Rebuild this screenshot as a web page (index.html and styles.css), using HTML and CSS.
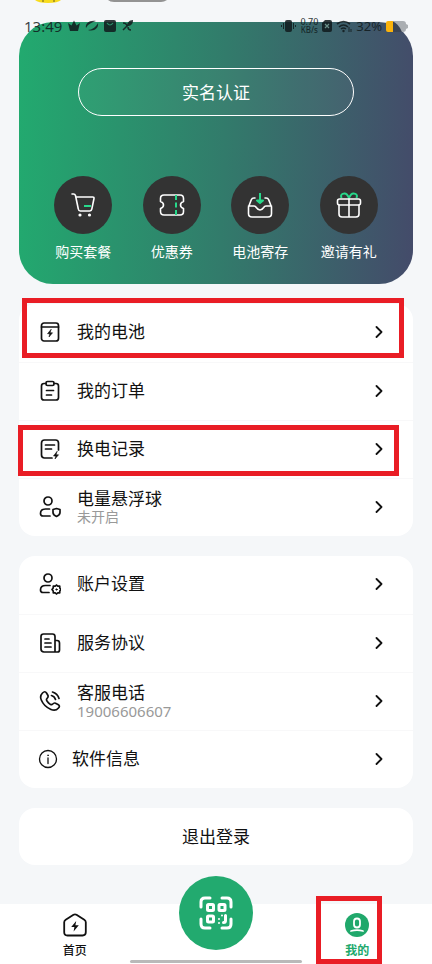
FILE: index.html
```html
<!DOCTYPE html>
<html lang="zh-CN">
<head>
<meta charset="utf-8">
<meta name="viewport" content="width=device-width, initial-scale=1">
<title>我的</title>
<link rel="stylesheet" href="styles.css">
</head>
<body>
<header class="status">
  <svg class="peek" width="140" height="4" viewBox="0 0 140 4" aria-hidden="true">
    <path d="M8 0h26q-3 3-13 3T8 0z" fill="#f8dc1c"/><path d="M16 0v2M27 0v2" stroke="#6b5c20"/>
    <path d="M81 0h59q-3 2-6 2H87q-4 0-6-2z" fill="#939393"/>
  </svg>
  <div class="status-side">
    <span class="clock">13:49</span>
    <svg width="67" height="14" viewBox="0 0 67 14" aria-hidden="true">
      <g fill="currentColor">
        <path d="M0 4l3.500 2.500L6 1.500l2.500 5L12 4l-2 8H2z"/>
        <path d="M18 9c-1-4 3-8 10-7-4 1-8 3-10 7zM30 4c1 5-4 9-10 7 4 0 8-3 10-7z"/>
        <rect x="36" y="1" width="12" height="12" rx="2"/>
        <path d="M65 1c-4 0-6 3-6 6 4 0 6-2 6-6z"/>
      </g>
      <path d="M39 4q3 4 6 0" fill="none" stroke="#2c8d69" stroke-width="1.200"/>
      <path d="M55 4q4 0 4 4M59 7l-4 4M60 8q0 3 3 3" fill="none" stroke="currentColor" stroke-width="1.500"/>
    </svg>
  </div>
  <div class="status-side">
    <svg width="15" height="14" viewBox="0 0 15 14" aria-hidden="true"><rect x="4" y="1" width="7" height="12" rx="2" fill="currentColor"/><path d="M2.500 4v6M.5 6v2M12.500 4v6M14.500 6v2" stroke="currentColor"/></svg>
    <span class="speed"><b>0.70</b><i>KB/s</i></span>
    <svg width="10" height="12" viewBox="0 0 10 12" aria-hidden="true"><path d="M3 0h5q2 0 2 2v8q0 2-2 2H2q-2 0-2-2V3z" fill="currentColor"/><path d="M3 4l4 4M7 4L3 8" stroke="#6b9089" stroke-width="1.200"/></svg>
    <svg width="16" height="12" viewBox="0 0 16 12" aria-hidden="true"><g fill="none" stroke="currentColor" stroke-width="1.600"><path d="M1 4q6.500-5 13 0M3 7q4.500-4 9 0M5 9q2.500-2 5 0"/><path d="M13 7v5M15 9v3" stroke-width="1"/></g><circle cx="7.500" cy="11" r="1.200" fill="currentColor"/></svg>
    <span class="percent">32%</span>
    <svg width="22" height="12" viewBox="0 0 22 12" aria-hidden="true"><path d="M6 1h11q3 0 3 3l2 1v3l-2 1q0 3-3 3H6z" fill="#aaaeb2"/><path d="M6 1q7 3 10 11H6z" fill="#3c4554"/><path d="M2 1h5v11H2q-2 0-2-2V3q0-2 2-2z" fill="#fbb30b"/></svg>
  </div>
</header>

<main class="page">
  <section class="hero">
    <button class="verify" type="button">实名认证</button>
    <nav class="shortcuts" aria-label="快捷服务">
      <a href="#package"><span class="disc"><svg viewBox="0 0 26 26"><path d="M2 2h1.500q1.500 0 2 1.500L8.300 17q.3 2 2 2h9.500q1.700 0 2-1.800L24 6.500q.2-1.500-1.300-1.500H6"/><path class="mint" d="M14 14h7"/><circle class="dot" cx="10" cy="23" r="1.600"/><circle class="dot" cx="19.500" cy="23" r="1.600"/></svg></span>购买套餐</a>
      <a href="#coupon"><span class="disc"><svg viewBox="0 0 26 26"><path d="M5 3h16q3.500 0 3.500 3.500v3q-3 1-3 3.500t3 3.500v3q0 3.500-3.500 3.500H5q-3.500 0-3.500-3.500v-3q3-1 3-3.500t-3-3.500v-3Q1.500 3 5 3z"/><path class="mint" d="M17 3v5M17 10.500v5M17 18v5"/></svg></span>优惠券</a>
      <a href="#deposit"><span class="disc"><svg viewBox="0 0 26 26"><path d="M8 6H7Q5 6 4.300 7.800L1.500 15v6.500Q1.500 25 5 25h16q3.500 0 3.500-3.500V15l-2.800-7.200Q21 6 19 6h-1M1.500 14H7q1.500 0 2.300 1.500Q11 18 13 18t3.700-2.500Q17.500 14 19 14h5.500"/><path class="mint" d="M13 1v9"/><path class="mint fill" d="M10 8.500h6L13 11z"/></svg></span>电池寄存</a>
      <a href="#invite"><span class="disc"><svg viewBox="0 0 26 26"><path class="mint" d="M13 6Q11 1 8 1.500 4 2 5.500 6M13 6q2-5 5-4.500 4 .5 2.500 4.500"/><rect x="1.500" y="7" width="23" height="6" rx="2"/><path d="M3 13v9q0 3 3 3h14q3 0 3-3v-9M13 7v18"/></svg></span>邀请有礼</a>
    </nav>
  </section>

  <section class="card">
    <a class="row" href="#battery">
      <svg class="icon" viewBox="0 0 22 22"><rect x="2.500" y="2" width="17" height="18" rx="2.500"/><path d="M2.500 6h17"/><path class="solid" d="M12 8.500l-3.500 4.200h2.300L10 16l3.500-4.200h-2.300z"/></svg>
      <span class="label">我的电池</span>
      <svg class="chevron" viewBox="0 0 8 12"><path d="M1.500 1l5 5-5 5"/></svg>
      <span class="mark mark-battery"></span>
    </a>
    <a class="row" href="#orders">
      <svg class="icon" viewBox="0 0 22 22"><path d="M7 3.500H5Q2.500 3.500 2.500 6v11.500Q2.500 20 5 20h12q2.500 0 2.500-2.500V6q0-2.500-2.500-2.500h-2"/><rect x="7" y="1.500" width="8" height="4" rx="1.500"/><path d="M7.500 10.500h7M7.500 15h5"/></svg>
      <span class="label">我的订单</span>
      <svg class="chevron" viewBox="0 0 8 12"><path d="M1.500 1l5 5-5 5"/></svg>
    </a>
    <a class="row" href="#swaps">
      <svg class="icon" viewBox="0 0 22 22"><path d="M13 20H5.500q-3 0-3-3V5q0-3 3-3h11q3 0 3 3v7M6.500 7h9M6.500 11h6"/><path class="solid" d="M18 13.500L14.500 18h2.300L16 21l3.500-4.200h-2.300z"/></svg>
      <span class="label">换电记录</span>
      <svg class="chevron" viewBox="0 0 8 12"><path d="M1.500 1l5 5-5 5"/></svg>
      <span class="mark mark-swaps"></span>
    </a>
    <a class="row" href="#float">
      <svg class="icon" viewBox="0 0 22 22"><circle cx="9" cy="5" r="4"/><path d="M11 20H4q-2.500 0-2.500-2.500 0-4.500 5-4.500h4"/><path d="M17.500 12.500l3.500 1v3q0 2.500-3.500 4-3.500-1.500-3.500-4v-3z"/></svg>
      <span class="label">电量悬浮球<small>未开启</small></span>
      <svg class="chevron" viewBox="0 0 8 12"><path d="M1.500 1l5 5-5 5"/></svg>
    </a>
  </section>

  <section class="card">
    <a class="row" href="#account">
      <svg class="icon" viewBox="0 0 22 22"><circle cx="9" cy="5" r="4"/><path d="M10 19.500H4q-2.500 0-2.500-2.500 0-4.500 5-4.500H11"/><path d="M17.500 12l1.300 1.200 1.900-.1.100 1.900 1.200 1.500-1.200 1.500-.1 1.900-1.900-.1-1.300 1.200-1.300-1.200-1.900.1-.1-1.900L13 16.500l1.200-1.500.1-1.900 1.900.1z"/><circle class="solid" cx="17.500" cy="16.500" r=".8"/></svg>
      <span class="label">账户设置</span>
      <svg class="chevron" viewBox="0 0 8 12"><path d="M1.500 1l5 5-5 5"/></svg>
    </a>
    <a class="row" href="#terms">
      <svg class="icon" viewBox="0 0 22 22"><path d="M16 20H5q-3 0-3-3V4.500Q2 2 4.500 2h9Q16 2 16 4.500zM16 8.500h2q2.500 0 2.500 2.500v7q0 2-2 2H16M6 7h4M6 11h6M6 15h6"/></svg>
      <span class="label">服务协议</span>
      <svg class="chevron" viewBox="0 0 8 12"><path d="M1.500 1l5 5-5 5"/></svg>
    </a>
    <a class="row" href="tel:19006606607">
      <svg class="icon" viewBox="0 0 22 22"><path d="M3.500 3Q6 .5 7.500 3L9 5.500Q9.500 7 8 8.500q-1 1 0 2.500 1.300 2 3.200 3.200 1.500.8 2.300 0 1.500-1.700 3-1L19 14.500q2.500 1.500.5 3.500-3 3.500-7.500 1.500Q5 16.500 2.300 10 .5 6 3.500 3zM12.500 5.500q3 .8 4 4M13.500 2q5 1.500 6.500 6.500"/></svg>
      <span class="label">客服电话<small class="phone">19006606607</small></span>
      <svg class="chevron" viewBox="0 0 8 12"><path d="M1.500 1l5 5-5 5"/></svg>
    </a>
    <a class="row row-compact" href="#about">
      <svg class="icon" viewBox="0 0 20 20"><circle cx="10" cy="10" r="8.500"/><path d="M10 9v5.500"/><circle class="solid" cx="10" cy="6.300" r=".5"/></svg>
      <span class="label">软件信息</span>
      <svg class="chevron" viewBox="0 0 8 12"><path d="M1.500 1l5 5-5 5"/></svg>
    </a>
  </section>

  <button class="logout" type="button">退出登录</button>
</main>

<nav class="tabs" aria-label="主导航">
  <a class="tab" href="#home">
    <svg viewBox="0 0 24 24"><path class="house" d="M10.500 1.800q1.500-1 3 0l7.800 5q1.500 1 1.500 2.500v10q0 3.200-3.200 3.200H4.400q-3.200 0-3.200-3.200v-10q0-1.500 1.500-2.500z"/><path d="M13.200 8l-5 6h3.200l-.8 4.500 5.200-6.200h-3.400z" fill="currentColor"/></svg>
    首页
  </a>
  <button class="scan" type="button" aria-label="扫码">
    <svg viewBox="0 0 34 34"><path d="M2 11V6q0-4 4-4h5M23 2h5q4 0 4 4v5M32 23v5q0 4-4 4h-5M11 32H6q-4 0-4-4v-5"/><rect x="8.500" y="8.500" width="6" height="6" rx="1"/><rect x="20" y="8.500" width="6" height="6" rx="1"/><rect x="8.500" y="20" width="6" height="6" rx="1"/><path d="M26.500 19.500v5q0 2-2 2"/><path class="pixels" d="M20 23v0M23 19.500v0M20 27v0"/></svg>
  </button>
  <a class="tab tab-active" href="#mine" aria-current="page">
    <svg viewBox="0 0 24 24"><circle cx="12" cy="12" r="12" fill="currentColor"/><rect x="9" y="5.500" width="6" height="9" rx="3" fill="none" stroke="#fff" stroke-width="1.800"/><path d="M6 18q6-1.600 12 0" fill="none" stroke="#fff" stroke-width="1.800" stroke-linecap="round"/></svg>
    我的
    <span class="mark mark-tab"></span>
  </a>
  <span class="home-bar"></span>
</nav>
</body>
</html>
```
FILE: styles.css
```css
* {
  box-sizing: border-box;
}

body {
  margin: 0;
  position: relative;
  background: #f5f7f9;
  color: #111;
  font-family: "Noto Sans", "Noto Sans CJK SC", sans-serif;
}

a {
  color: inherit;
  text-decoration: none;
}

button {
  font: inherit;
  border: 0;
  padding: 0;
}

svg {
  display: block;
  flex: none;
}

/* Status bar, drawn over the top of the hero card */
.status {
  position: absolute;
  z-index: 2;
  top: 0;
  left: 0;
  right: 0;
  display: flex;
  justify-content: space-between;
  padding: 16px 24px 0;
  color: rgba(16, 26, 28, .85);
}

.peek {
  position: absolute;
  top: 0;
  left: 27px;
}

.status-side {
  display: flex;
  align-items: center;
  gap: 4px;
  height: 20px;
}

.status-side svg {
  overflow: visible;
}

.clock {
  font-size: 15px;
  line-height: 20px;
  margin-right: 2px;
}

.speed {
  display: flex;
  flex-direction: column;
  align-items: center;
  line-height: 8px;
}

.speed b {
  font-size: 9px;
  font-weight: 500;
}

.speed i {
  font-size: 8px;
  font-style: normal;
  font-weight: 500;
}

.percent {
  font-size: 13px;
}

.page {
  display: flex;
  flex-direction: column;
  gap: 20px;
  padding: 22px 19px 0;
}

.hero {
  padding: 46px 20px 22px;
  border-radius: 34px;
  background: linear-gradient(92deg, #22aa6f, #327b6b 52%, #444b6a);
  color: #fff;
}

.verify {
  display: block;
  width: 78%;
  height: 48px;
  margin: 0 auto 60px;
  padding-bottom: 2px;
  border: 1px solid #fff;
  border-radius: 24px;
  background: rgba(255, 255, 255, .04);
  color: #fff;
  font-size: 17px;
}

.shortcuts {
  display: grid;
  grid-template-columns: repeat(4, 1fr);
}

.shortcuts a {
  display: flex;
  flex-direction: column;
  align-items: center;
  gap: 8px;
  font-size: 14px;
  line-height: 20px;
}

.disc {
  display: grid;
  place-items: center;
  width: 58px;
  height: 58px;
  border-radius: 50%;
  background: #333;
}

.disc svg {
  width: 26px;
  height: 26px;
  fill: none;
  stroke: #fff;
  stroke-width: 1.6;
  stroke-linecap: round;
  stroke-linejoin: round;
}

.disc .mint {
  stroke: #27d98b;
  stroke-width: 2;
  stroke-linecap: butt;
}

.disc .fill {
  fill: #27d98b;
}

.disc .dot {
  fill: #fff;
  stroke: none;
}

.card {
  border-radius: 16px;
  background: #fff;
}

.row {
  position: relative;
  display: flex;
  align-items: center;
  gap: 16px;
  min-height: 58px;
  padding: 0 30px 2px 20px;
}

.row + .row {
  border-top: 1px solid #f8f8f9;
}

.row-compact {
  gap: 14px;
  padding-left: 19px;
}

.icon {
  width: 22px;
  height: 22px;
  fill: none;
  stroke: #111;
  stroke-width: 1.7;
  stroke-linecap: round;
  stroke-linejoin: round;
}

.row-compact .icon {
  width: 20px;
  height: 20px;
  stroke-width: 1.3;
}

.icon .solid {
  fill: #111;
  stroke-width: .6;
}

.label {
  flex: 1;
  font-size: 17px;
  line-height: 20px;
}

.label small {
  display: block;
  color: #999;
  font-size: 14px;
  line-height: 16px;
}

.label .phone {
  font-size: 15px;
}

.chevron {
  width: 8px;
  height: 12px;
  fill: none;
  stroke: #111;
  stroke-width: 1.8;
  stroke-linecap: round;
  stroke-linejoin: round;
}

/* Red call-out frames over the entries to tap */
.mark {
  position: absolute;
  z-index: 1;
  border: 5px solid #e91d25;
  pointer-events: none;
}

.mark-battery {
  inset: -6px 9px 4px 3px;
}

.mark-swaps {
  inset: 4px 14px 2px -1px;
}

.mark-tab {
  inset: -8px 46px 0 29px;
}

.logout {
  height: 57px;
  padding-bottom: 2px;
  border-radius: 16px;
  background: #fff;
  color: #111;
  font-size: 17px;
}

.tabs {
  position: relative;
  display: grid;
  grid-template-columns: repeat(3, 1fr);
  height: 60px;
  margin-top: 39px;
  padding: 0 4px;
  background: #fff;
}

.tab {
  position: relative;
  display: flex;
  flex-direction: column;
  align-items: center;
  gap: 5px;
  padding-top: 9px;
  font-size: 12px;
  font-weight: 500;
  line-height: 18px;
}

.tab svg {
  width: 24px;
  height: 24px;
}

.house {
  fill: none;
  stroke: currentColor;
  stroke-width: 1.8;
}

.tab-active {
  color: #20a86b;
  font-weight: 700;
}

.scan {
  display: grid;
  place-items: center;
  justify-self: center;
  width: 74px;
  height: 74px;
  margin-top: -28px;
  border-radius: 50%;
  background: #22aa6f;
}

.scan svg {
  width: 34px;
  height: 34px;
  fill: none;
  stroke: #fff;
  stroke-width: 3;
  stroke-linecap: round;
}

.scan .pixels {
  stroke-width: 2;
}

.home-bar {
  position: absolute;
  bottom: 1px;
  left: 30%;
  right: 30%;
  height: 3px;
  border-radius: 2px;
  background: #b9b9b9;
}
```
